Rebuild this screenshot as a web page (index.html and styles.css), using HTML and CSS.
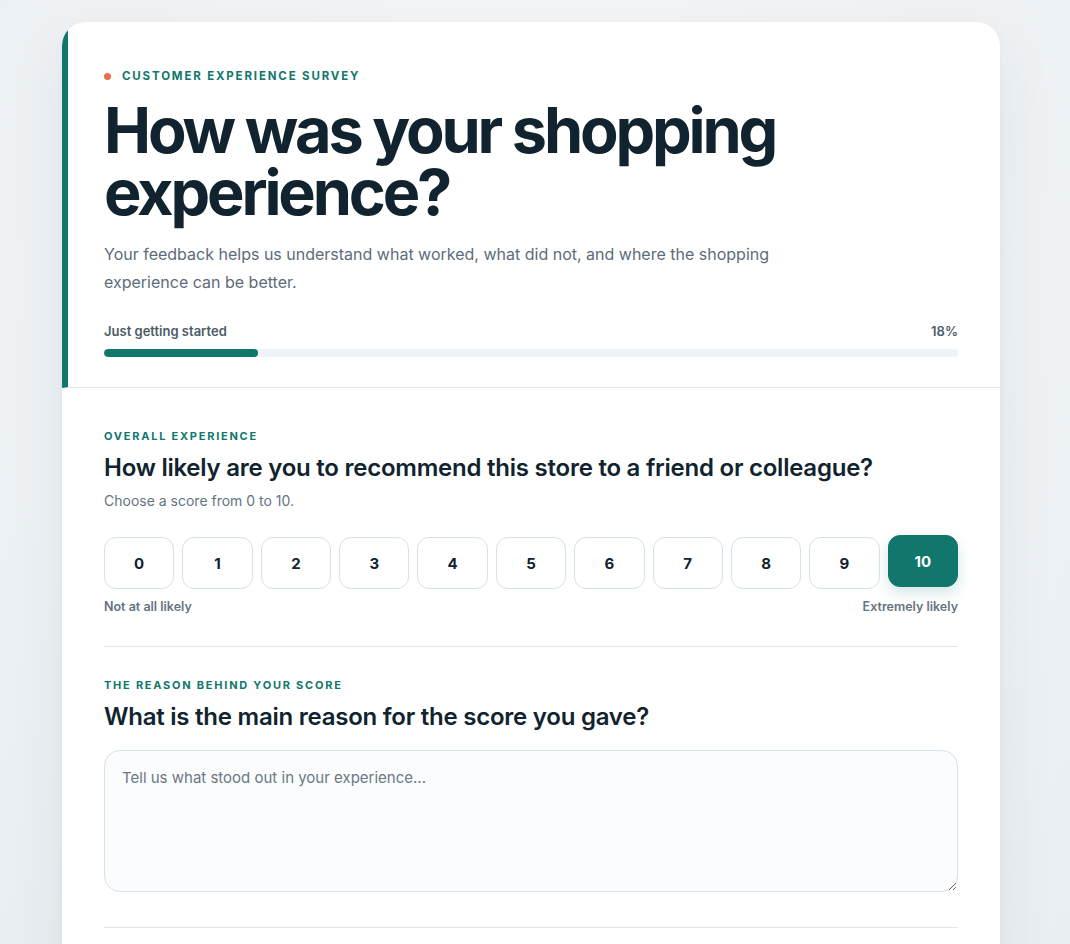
FILE: index.html
```html
<!DOCTYPE html>
<html lang="en">
<head>
<meta charset="utf-8">
<title>Customer Experience Survey</title>
<link rel="stylesheet" href="styles.css">
</head>
<body>
<main class="card">
  <header class="hero">
    <div class="eyebrow-top"><span class="dot"></span>CUSTOMER EXPERIENCE SURVEY</div>
    <h1 class="title">How was your shopping experience?</h1>
    <p class="lead">Your feedback helps us understand what worked, what did not, and where the shopping experience can be better.</p>
    <div class="progress">
      <div class="progress-labels"><span>Just getting started</span><span>18%</span></div>
      <div class="track"><div class="fill" style="width:18%"></div></div>
    </div>
  </header>
  <div class="body">
    <section class="section">
      <div class="eyebrow">OVERALL EXPERIENCE</div>
      <h2 class="question">How likely are you to recommend this store to a friend or colleague?</h2>
      <p class="hint">Choose a score from 0 to 10.</p>
      <div class="scale">
        <button class="score">0</button>
        <button class="score">1</button>
        <button class="score">2</button>
        <button class="score">3</button>
        <button class="score">4</button>
        <button class="score">5</button>
        <button class="score">6</button>
        <button class="score">7</button>
        <button class="score">8</button>
        <button class="score">9</button>
        <button class="score selected">10</button>
      </div>
      <div class="scale-labels"><span>Not at all likely</span><span>Extremely likely</span></div>
    </section>
    <section class="section">
      <div class="eyebrow">THE REASON BEHIND YOUR SCORE</div>
      <h2 class="question q2">What is the main reason for the score you gave?</h2>
      <textarea class="reason" placeholder="Tell us what stood out in your experience..."></textarea>
    </section>
  </div>
</main>
</body>
</html>
```
FILE: styles.css
```css
* { box-sizing: border-box; }
html, body { margin: 0; height: 100%; }
body {
  background: radial-gradient(ellipse at 50% 30%, #f5f8fa 0%, #eef2f5 70%, #e9eef2 100%);
  font-family: Inter, "Noto Sans", sans-serif;
  color: #10232f;
  overflow: hidden;
}
.card {
  margin: 22px 0 0 62px;
  width: 938px;
  background: #fff;
  border-radius: 24px;
  overflow: hidden;
  box-shadow: 0 24px 60px rgba(20, 45, 70, 0.08), 0 2px 6px rgba(20, 45, 70, 0.03);
  min-height: 1000px;
}
.hero {
  border-left: 6px solid #11776d;
  padding: 47px 42px 30px 36px;
  border-bottom: 1px solid #dfe7ea;
}
.eyebrow-top {
  display: flex;
  align-items: center;
  font-size: 11.5px;
  font-weight: 700;
  letter-spacing: 0.16em;
  color: #11776d;
  line-height: 14px;
}
.dot {
  width: 7px; height: 7px; border-radius: 50%;
  background: #e76f51;
  margin-right: 11px;
}
.title {
  margin: 16px 0 0;
  font-size: 63px;
  line-height: 62px;
  font-weight: 700;
  letter-spacing: -0.05em;
  color: #10232f;
  max-width: 720px;
}
.lead {
  margin: 17px 0 0;
  font-size: 16px;
  line-height: 28px;
  color: #5d6c7a;
  max-width: 680px;
}
.progress { margin-top: 27px; }
.progress-labels {
  display: flex;
  justify-content: space-between;
  font-size: 13px;
  font-weight: 600;
  color: #4d5b67;
  line-height: 16px;
}
.track {
  margin-top: 10px;
  height: 8px;
  background: #edf3f6;
  border-radius: 8px;
  overflow: hidden;
}
.fill { height: 100%; background: #11776d; border-radius: 8px; }
.body { padding: 9px 42px 0; }
.section {
  padding: 32px 0 31px;
  border-bottom: 1px solid #dfe7ea;
}
.section + .section { padding-top: 31px; padding-bottom: 35px; }
.eyebrow {
  font-size: 11px;
  font-weight: 700;
  letter-spacing: 0.16em;
  color: #11776d;
  line-height: 14px;
}
.question {
  margin: 10px 0 0;
  font-size: 24px;
  line-height: 30px;
  font-weight: 600;
  letter-spacing: -0.01em;
  color: #10232f;
}
.hint {
  margin: 8px 0 0;
  font-size: 14px;
  line-height: 20px;
  color: #65737f;
}
.scale {
  margin-top: 26px;
  display: grid;
  grid-template-columns: repeat(11, 1fr);
  gap: 8px;
}
.score {
  height: 52px;
  border: 1px solid #d5e2e8;
  border-radius: 12px;
  background: #fff;
  font-family: Inter, sans-serif;
  font-size: 15px;
  font-weight: 700;
  color: #10232f;
  padding: 0;
}
.score.selected {
  background: #11776d;
  border-color: #11776d;
  color: #fff;
  transform: translateY(-2px);
  box-shadow: 0 6px 14px rgba(17, 119, 109, 0.18);
}
.scale-labels {
  margin-top: 10px;
  display: flex;
  justify-content: space-between;
  font-size: 12.5px;
  font-weight: 600;
  line-height: 16px;
  color: #65737f;
}
.q2 { margin-bottom: 18px; }
.reason {
  display: block;
  width: 100%;
  height: 142px;
  border: 1px solid #d5e2e8;
  border-radius: 16px;
  background: #fafcfd;
  padding: 17px 17px;
  font-family: Inter, sans-serif;
  font-size: 15px;
  line-height: 20px;
  color: #10232f;
  resize: vertical;
}
.reason::placeholder { color: #6b7884; }
```
